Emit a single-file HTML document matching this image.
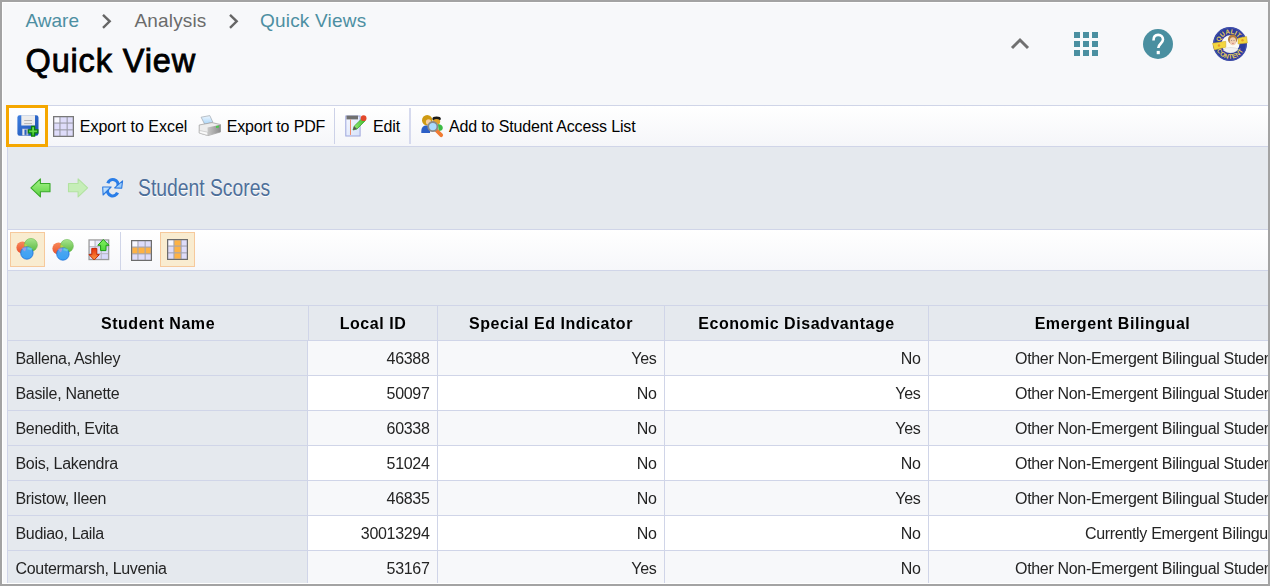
<!DOCTYPE html>
<html><head><meta charset="utf-8"><title>Quick View</title><style>
*{box-sizing:border-box}
html,body{margin:0;padding:0}
body{width:1270px;height:586px;overflow:hidden;position:relative;background:#f7f8fa;font-family:"Liberation Sans",sans-serif;color:#000}
.a{position:absolute}
.t{position:absolute;white-space:nowrap;line-height:20px}
svg{position:absolute;overflow:visible}
.c{position:absolute;white-space:nowrap;height:34px;font-size:16px;letter-spacing:-0.32px;line-height:36px;color:#242424}
</style></head><body>
<div class="t" style="left:25.5px;top:9px;font-size:19px;line-height:24px;color:#4d8fa2">Aware</div>
<svg style="left:100px;top:14px" width="14" height="16" viewBox="0 0 14 16"><polyline points="3,0.8 9.7,7.3 3,13.8" fill="none" stroke="#666" stroke-width="2.4"/></svg>
<div class="t" style="left:134.5px;top:9px;font-size:19px;line-height:24px;color:#6b6b6b;letter-spacing:0.15px">Analysis</div>
<svg style="left:226.5px;top:14px" width="14" height="16" viewBox="0 0 14 16"><polyline points="3,0.8 9.7,7.3 3,13.8" fill="none" stroke="#666" stroke-width="2.4"/></svg>
<div class="t" style="left:260px;top:9px;font-size:19px;line-height:24px;color:#4d8fa2;letter-spacing:0.2px">Quick Views</div>
<div class="t" style="left:25.5px;top:42.5px;font-size:32.5px;line-height:36px;color:#000;-webkit-text-stroke:0.85px #000;letter-spacing:0.85px">Quick View</div>
<svg style="left:1008px;top:34px" width="24" height="18" viewBox="0 0 24 18"><polyline points="4,14 12,6 20,14" fill="none" stroke="#707070" stroke-width="3"/></svg>
<svg style="left:1074px;top:32px" width="24" height="24" viewBox="0 0 24 24"><rect x="0" y="0" width="6" height="6" fill="#4a8fa0"/><rect x="0" y="9" width="6" height="6" fill="#4a8fa0"/><rect x="0" y="18" width="6" height="6" fill="#4a8fa0"/><rect x="9" y="0" width="6" height="6" fill="#4a8fa0"/><rect x="9" y="9" width="6" height="6" fill="#4a8fa0"/><rect x="9" y="18" width="6" height="6" fill="#4a8fa0"/><rect x="18" y="0" width="6" height="6" fill="#4a8fa0"/><rect x="18" y="9" width="6" height="6" fill="#4a8fa0"/><rect x="18" y="18" width="6" height="6" fill="#4a8fa0"/></svg>
<svg style="left:1143px;top:29px" width="30" height="30" viewBox="0 0 30 30"><circle cx="15" cy="15" r="15" fill="#4a8fa0"/><path d="M10.5 11.4 C10.5 7.8 12.6 5.9 15.2 5.9 C18 5.9 20 7.8 20 10.6 C20 14.2 15.3 14.8 15.3 19" fill="none" stroke="#fff" stroke-width="2.6"/><rect x="13.7" y="21.9" width="3.1" height="3.3" fill="#fff"/></svg>
<svg style="left:1213px;top:26.5px" width="34" height="34" viewBox="0 0 34 34">
<defs><path id="arcT" d="M6.8 17 A10.2 10.2 0 0 1 27.2 17"/><path id="arcB" d="M2.2 17 A14.8 14.8 0 0 0 31.8 17"/></defs>
<circle cx="17" cy="17" r="17" fill="#2c3c9e"/>
<circle cx="17" cy="17" r="16.3" fill="none" stroke="#5866b8" stroke-width="0.5"/>
<text font-family="Liberation Sans" font-weight="bold" font-size="6.4" fill="#ead05a"><textPath href="#arcT" startOffset="50%" text-anchor="middle">QUALITY</textPath></text>
<text font-family="Liberation Sans" font-weight="bold" font-size="6.4" fill="#ead05a" letter-spacing="0.3"><textPath href="#arcB" startOffset="50%" text-anchor="middle">CONTENT</textPath></text>
<circle cx="17.5" cy="17" r="9" fill="#fbfbf6"/>
<path d="M-0.5 16.3 L12.8 14.3 L12.8 20.2 L1.4 22.9 Z" fill="#f3d63e" stroke="#c8a428" stroke-width="0.5"/>
<path d="M25 11.2 L33.6 9.6 L34.4 15.9 L25 17 Z" fill="#f3d63e" stroke="#c8a428" stroke-width="0.5"/>
<circle cx="6" cy="18.5" r="1.2" fill="#e59a2a"/><circle cx="29.5" cy="13.2" r="1.2" fill="#e59a2a"/>
<path d="M10 23 Q13 20 18 20.5 Q23 20.5 25.5 22.5 Q22 25.8 17.5 25.8 Q13 25.8 10 23 Z" fill="#f2f2f2" stroke="#c4c4c4" stroke-width="0.4"/>
<ellipse cx="19.6" cy="12.4" rx="4.6" ry="4.8" fill="#b07a3c"/>
<ellipse cx="19.9" cy="14.2" rx="3.2" ry="4" fill="#f0cdb0"/>
<circle cx="18.7" cy="13.5" r="0.45" fill="#555"/><circle cx="21" cy="13.5" r="0.45" fill="#555"/>
<path d="M19 16.3 Q19.9 17 20.8 16.3" stroke="#c05a6a" stroke-width="0.6" fill="none"/>
</svg>
<div class="a" style="left:7px;top:105px;width:1261px;height:42px;border-top:1px solid #d0d5e8;border-bottom:1px solid #d0d5e8;background:linear-gradient(#ffffff,#f5f6f9)"></div>
<div class="a" style="left:6px;top:105px;width:42px;height:42px;border:3px solid #f5a700"></div>
<svg style="left:16px;top:114px" width="24" height="24" viewBox="0 0 24 24">
<defs><linearGradient id="gb" x1="0" y1="0" x2="1" y2="1"><stop offset="0" stop-color="#3d7fe0"/><stop offset="1" stop-color="#1b4db0"/></linearGradient>
<linearGradient id="gg" x1="0" y1="0" x2="0" y2="1"><stop offset="0" stop-color="#86f060"/><stop offset="1" stop-color="#3cc22a"/></linearGradient></defs>
<rect x="1.4" y="1.2" width="21.1" height="20.5" rx="2.2" fill="url(#gb)"/>
<rect x="5.3" y="1.2" width="13.7" height="10.3" fill="#ececec"/>
<rect x="8.2" y="6" width="7.8" height="1" fill="#b5b5b5"/><rect x="8.2" y="9.1" width="7.8" height="1" fill="#b5b5b5"/>
<rect x="6.1" y="14.7" width="6.2" height="6.8" fill="#aab6d2"/><rect x="6.8" y="15.2" width="1.6" height="6" fill="#e4e8f0"/><rect x="8.6" y="15.8" width="1.8" height="5" fill="#2a60c0"/>
<path d="M15.6 12.5 h3 v3.3 h3.2 v3 h-3.2 v3.3 h-3 v-3.3 h-3.2 v-3 h3.2 z" fill="url(#gg)" stroke="#0a800a" stroke-width="1.3" stroke-linejoin="miter"/>
</svg>
<svg style="left:53.3px;top:115.6px" width="21" height="21" viewBox="0 0 21 21"><rect x="0" y="0" width="21" height="21" fill="#787878"/><rect x="1.1" y="1.1" width="18.8" height="18.8" fill="#9a9aa6"/><rect x="1.4" y="1.4" width="5.0" height="5.1" fill="#f7f7fe"/><rect x="1.4" y="7.6" width="5.0" height="5.7" fill="#dedcfa"/><rect x="1.4" y="14.4" width="5.0" height="5.2" fill="#dedcfa"/><rect x="7.5" y="1.4" width="6.1" height="5.1" fill="#dedcfa"/><rect x="7.5" y="7.6" width="6.1" height="5.7" fill="#dedcfa"/><rect x="7.5" y="14.4" width="6.1" height="5.2" fill="#dedcfa"/><rect x="14.7" y="1.4" width="4.9" height="5.1" fill="#dedcfa"/><rect x="14.7" y="7.6" width="4.9" height="5.7" fill="#dedcfa"/><rect x="14.7" y="14.4" width="4.9" height="5.2" fill="#dedcfa"/></svg>
<div class="t" style="left:79.8px;top:117px;font-size:16px;letter-spacing:0px">Export to Excel</div>
<svg style="left:195px;top:110px" width="30" height="30" viewBox="0 0 30 30">
<defs><linearGradient id="pp" x1="0" y1="0" x2="0" y2="1"><stop offset="0" stop-color="#eef7ff"/><stop offset="1" stop-color="#a8d4f8"/></linearGradient>
<linearGradient id="pf" x1="0" y1="0" x2="1" y2="0"><stop offset="0" stop-color="#c8c8c8"/><stop offset="1" stop-color="#8c8c8c"/></linearGradient></defs>
<path d="M6.1 7.2 L14.8 5.6 L17.9 12.3 L9.7 14.3 Z" fill="url(#pp)" stroke="#a0a8b0" stroke-width="0.7"/>
<path d="M4.2 15 L17 12.6 L25.5 14.5 L25.5 22 L13 25.6 L4.2 23 Z" fill="#ededed" stroke="#9a9a9a" stroke-width="0.7"/>
<path d="M12.5 17.5 L25.5 14.8 L25.5 22 L12.8 25.6 Z" fill="url(#pf)"/>
<path d="M4.4 20.5 L12.6 22.2 L12.8 25.4 L4.4 23 Z" fill="#fafafa" stroke="#b0b0b0" stroke-width="0.5"/>
<path d="M21 16 L24 15.4 L24 17.4 L21 18 Z" fill="#4cc84c"/>
</svg>
<div class="t" style="left:226.7px;top:117px;font-size:16px;letter-spacing:-0.15px">Export to PDF</div>
<div class="a" style="left:334px;top:108px;width:1px;height:36px;background:#cdd2e8"></div>
<svg style="left:340px;top:110px" width="30" height="30" viewBox="0 0 30 30">
<defs><linearGradient id="pn" x1="0" y1="0" x2="1" y2="1"><stop offset="0" stop-color="#f6f8ff"/><stop offset="1" stop-color="#d6e2fa"/></linearGradient>
<linearGradient id="pg" x1="0" y1="0" x2="1" y2="0"><stop offset="0" stop-color="#9af07a"/><stop offset="1" stop-color="#3cb82a"/></linearGradient></defs>
<rect x="5.8" y="6" width="14.3" height="20" fill="url(#pn)" stroke="#9ea6dc" stroke-width="1"/>
<rect x="6.5" y="5.6" width="11.5" height="3.8" fill="#707070"/>
<rect x="10" y="9.4" width="1" height="15.5" fill="#f08a6a"/>
<path d="M13 20 L14.2 16.2 L22.5 8 L25.2 10.8 L17 19 Z" fill="url(#pg)" stroke="#2e9a20" stroke-width="0.7"/>
<path d="M13 20 L14.2 16.2 L17 19 Z" fill="#555"/>
<circle cx="23.6" cy="8.2" r="2.9" fill="#e2482a"/>
</svg>
<div class="t" style="left:373px;top:117px;font-size:16px;letter-spacing:-0.15px">Edit</div>
<div class="a" style="left:409px;top:108px;width:2px;height:36px;background:#d6daee"></div>
<svg style="left:418px;top:112px" width="28" height="28" viewBox="0 0 28 28">
<ellipse cx="9.2" cy="8.3" rx="5.2" ry="5.2" fill="#cf9a12"/>
<ellipse cx="10.5" cy="10" rx="2.6" ry="2.8" fill="#f5cfa0"/>
<path d="M3.3 19 Q3.3 13.4 8.5 13.4 Q12 13.4 12 17 L12 21 L3.3 21 Z" fill="#2c5fc6"/>
<ellipse cx="18.6" cy="6.8" rx="4.2" ry="2.4" fill="#1a1a1a"/>
<ellipse cx="18.6" cy="9.8" rx="3.6" ry="2.8" fill="#e2a32a"/>
<path d="M20 12 Q24.8 12.5 24.8 16 Q24.8 19 20.5 19 Z" fill="#3bbb45"/>
<path d="M18.5 18.5 L23.2 23.2" stroke="#f07a32" stroke-width="3.8" stroke-linecap="round"/>
<circle cx="14.8" cy="14.6" r="4.6" fill="#aadcff" stroke="#8a8a8a" stroke-width="1.8"/>
</svg>
<div class="t" style="left:449px;top:117px;font-size:16px;letter-spacing:-0.15px">Add to Student Access List</div>
<div class="a" style="left:7px;top:147px;width:1261px;height:82px;background:#e5e9ee;border-left:1px solid #d0d5e8"></div>
<svg style="left:28px;top:176px" width="26" height="26" viewBox="0 0 26 26">
<defs><linearGradient id="ag" x1="0" y1="0" x2="0" y2="1"><stop offset="0" stop-color="#a6f48a"/><stop offset="1" stop-color="#5cd042"/></linearGradient></defs>
<path d="M2.9 11.8 L12.4 2.9 L12.4 7.5 L22 7.5 L22 15.7 L12.4 15.7 L12.4 20.9 Z" fill="url(#ag)" stroke="#3aaa2a" stroke-width="1.1" stroke-linejoin="round"/></svg>
<svg style="left:65px;top:176px" width="26" height="26" viewBox="0 0 26 26">
<path d="M22.6 11.8 L13.1 2.9 L13.1 7.5 L3.5 7.5 L3.5 15.7 L13.1 15.7 L13.1 20.9 Z" fill="#c6eeb8" stroke="#b2e2a0" stroke-width="1.1" stroke-linejoin="round"/></svg>
<svg style="left:100px;top:175px" width="26" height="26" viewBox="0 0 26 26">
<defs><linearGradient id="rg" x1="0" y1="0" x2="1" y2="1"><stop offset="0" stop-color="#d8eeff"/><stop offset="1" stop-color="#7cbcf8"/></linearGradient>
<linearGradient id="rs" x1="0" y1="0" x2="0" y2="1"><stop offset="0" stop-color="#3a8ef0"/><stop offset="1" stop-color="#5aaaf8"/></linearGradient></defs>
<path d="M7.8 8.2 A5.2 5.2 0 0 1 17.8 11.3" fill="none" stroke="#2a7ee8" stroke-width="3.2"/>
<path d="M22.6 5.8 L21.7 13.3 L14.6 12.9 Z" fill="url(#rg)" stroke="#2a78e0" stroke-width="1.1" stroke-linejoin="round"/>
<path d="M17.5 17.6 A5.2 5.2 0 0 1 7.6 14.5" fill="none" stroke="#2a7ee8" stroke-width="3.2"/>
<path d="M2.7 12 L3.1 20 L11.1 12 Z" fill="url(#rg)" stroke="#2a78e0" stroke-width="1.1" stroke-linejoin="round"/>
</svg>
<div class="t" style="left:138px;top:175px;font-size:23px;line-height:26px;color:#4e6f9a;transform-origin:0 0;transform:scaleX(0.84);text-shadow:0 1px 0 #fff">Student Scores</div>
<div class="a" style="left:7px;top:229px;width:1261px;height:42px;border-top:1px solid #d0d5e8;border-bottom:1px solid #d0d5e8;border-left:1px solid #d0d5e8;background:linear-gradient(#ffffff,#f6f7fa)"></div>
<div class="a" style="left:10px;top:232px;width:35px;height:35px;background:#f9ecd0;border:1px solid #f6c99c"></div>
<div class="a" style="left:160px;top:232px;width:35px;height:35px;background:#f9ecd0;border:1px solid #f6c99c"></div>
<svg style="left:14px;top:236px" width="26" height="26" viewBox="0 0 26 26">
<defs><linearGradient id="vr1" x1="0" y1="0" x2="0" y2="1"><stop offset="0" stop-color="#f88a5a"/><stop offset="1" stop-color="#e8502e"/></linearGradient>
<linearGradient id="vg1" x1="0" y1="0" x2="0" y2="1"><stop offset="0" stop-color="#a8e48c"/><stop offset="1" stop-color="#5ab840"/></linearGradient>
<linearGradient id="vb1" x1="0" y1="0" x2="0" y2="1"><stop offset="0" stop-color="#50a8f0"/><stop offset="1" stop-color="#3aa0f4"/></linearGradient></defs>
<circle cx="8.5" cy="11.5" r="6.1" fill="url(#vr1)"/>
<circle cx="16.9" cy="8.9" r="6.5" fill="url(#vg1)" stroke="#58b040" stroke-width="0.5"/>
<path d="M10.4 7.6 A6.5 6.5 0 0 1 14.4 14.3 A6.1 6.1 0 0 1 10.4 7.6 Z" fill="#c8d040" opacity="0.8"/>
<circle cx="12.9" cy="17" r="6.2" fill="url(#vb1)" stroke="#2070d8" stroke-width="0.8"/>
<path d="M8 12 Q10 11 12.5 11.5 L11 15.5 Q9 15 8 12 Z" fill="#b098e0" opacity="0.8"/>
<path d="M13.5 11 Q16 11.2 18.6 12.8 L17 14.5 Q15 13 13.5 13.5 Z" fill="#70d8d0" opacity="0.8"/>
</svg>
<svg style="left:50px;top:237px" width="26" height="26" viewBox="0 0 26 26">
<defs><linearGradient id="vr2" x1="0" y1="0" x2="0" y2="1"><stop offset="0" stop-color="#f88a5a"/><stop offset="1" stop-color="#e8502e"/></linearGradient>
<linearGradient id="vg2" x1="0" y1="0" x2="0" y2="1"><stop offset="0" stop-color="#a8e48c"/><stop offset="1" stop-color="#5ab840"/></linearGradient>
<linearGradient id="vb2" x1="0" y1="0" x2="0" y2="1"><stop offset="0" stop-color="#50a8f0"/><stop offset="1" stop-color="#3aa0f4"/></linearGradient></defs>
<circle cx="8.5" cy="11.5" r="6.1" fill="url(#vr2)"/>
<circle cx="16.9" cy="8.9" r="6.5" fill="url(#vg2)" stroke="#58b040" stroke-width="0.5"/>
<path d="M10.4 7.6 A6.5 6.5 0 0 1 14.4 14.3 A6.1 6.1 0 0 1 10.4 7.6 Z" fill="#c8d040" opacity="0.8"/>
<circle cx="12.9" cy="17" r="6.2" fill="url(#vb2)" stroke="#2070d8" stroke-width="0.8"/>
<path d="M8 12 Q10 11 12.5 11.5 L11 15.5 Q9 15 8 12 Z" fill="#b098e0" opacity="0.8"/>
<path d="M13.5 11 Q16 11.2 18.6 12.8 L17 14.5 Q15 13 13.5 13.5 Z" fill="#70d8d0" opacity="0.8"/>
</svg>
<svg style="left:86px;top:236px" width="26" height="26" viewBox="0 0 26 26">
<defs><linearGradient id="ig" x1="0" y1="0" x2="0" y2="1"><stop offset="0" stop-color="#80f060"/><stop offset="1" stop-color="#50d838"/></linearGradient>
<linearGradient id="ir" x1="0" y1="0" x2="0" y2="1"><stop offset="0" stop-color="#e83010"/><stop offset="1" stop-color="#fc9a40"/></linearGradient></defs>
<rect x="2.4" y="3.3" width="20.9" height="20.9" fill="#9a9a9a"/>
<rect x="3.6" y="4.5" width="18.5" height="18.5" fill="#b8b8c4"/>
<rect x="3.8" y="4.7" width="4.7" height="5.4" fill="#f8f8fe"/><rect x="9.6" y="4.7" width="5.1" height="5.4" fill="#e6e6fa"/><rect x="15.8" y="4.7" width="6.1" height="5.4" fill="#e0e0fa"/>
<rect x="3.8" y="11.2" width="4.7" height="5.9" fill="#e6e6fa"/><rect x="9.6" y="11.2" width="5.1" height="5.9" fill="#e0e0fa"/><rect x="15.8" y="11.2" width="6.1" height="5.9" fill="#dcdcfa"/>
<rect x="3.8" y="18.2" width="4.7" height="4.6" fill="#e0e0fa"/><rect x="9.6" y="18.2" width="5.1" height="4.6" fill="#dcdcfa"/><rect x="15.8" y="18.2" width="6.1" height="4.6" fill="#d8d8fa"/>
<path d="M17.3 3.5 L23 9.3 L20 9.3 L20 14.6 L14.6 14.6 L14.6 9.3 L11.8 9.3 Z" fill="url(#ig)" stroke="#1c9a14" stroke-width="1" stroke-linejoin="round"/>
<path d="M8.2 24 L13.4 18.6 L10.8 18.6 L10.8 12.4 L5.8 12.4 L5.8 18.6 L3 18.6 Z" fill="url(#ir)" stroke="#c02808" stroke-width="1" stroke-linejoin="round"/>
</svg>
<div class="a" style="left:120px;top:232px;width:1px;height:38px;background:#d0d5e8"></div>
<svg style="left:131.3px;top:239.5px" width="21" height="21" viewBox="0 0 21 21"><rect x="0" y="0" width="21" height="21" fill="#6c6c6c"/><rect x="1.1" y="1.1" width="18.8" height="18.8" fill="#a4a4b0"/><rect x="1.4" y="1.4" width="5.0" height="5.1" fill="#f7f7fe"/><rect x="1.4" y="7.6" width="5.0" height="5.7" fill="#fdb246"/><rect x="1.4" y="14.4" width="5.0" height="5.2" fill="#dedcfa"/><rect x="7.5" y="1.4" width="6.1" height="5.1" fill="#dedcfa"/><rect x="7.5" y="7.6" width="6.1" height="5.7" fill="#fdb246"/><rect x="7.5" y="14.4" width="6.1" height="5.2" fill="#dedcfa"/><rect x="14.7" y="1.4" width="4.9" height="5.1" fill="#dedcfa"/><rect x="14.7" y="7.6" width="4.9" height="5.7" fill="#fdb246"/><rect x="14.7" y="14.4" width="4.9" height="5.2" fill="#dedcfa"/></svg>
<svg style="left:167.3px;top:238.7px" width="21" height="21" viewBox="0 0 21 21"><rect x="0" y="0" width="21" height="21" fill="#6c6c6c"/><rect x="1.1" y="1.1" width="18.8" height="18.8" fill="#a4a4b0"/><rect x="1.4" y="1.4" width="5.0" height="5.1" fill="#f7f7fe"/><rect x="1.4" y="7.6" width="5.0" height="5.7" fill="#dedcfa"/><rect x="1.4" y="14.4" width="5.0" height="5.2" fill="#dedcfa"/><rect x="7.5" y="1.4" width="6.1" height="5.1" fill="#fdb246"/><rect x="7.5" y="7.6" width="6.1" height="5.7" fill="#fdb246"/><rect x="7.5" y="14.4" width="6.1" height="5.2" fill="#fdb246"/><rect x="14.7" y="1.4" width="4.9" height="5.1" fill="#dedcfa"/><rect x="14.7" y="7.6" width="4.9" height="5.7" fill="#dedcfa"/><rect x="14.7" y="14.4" width="4.9" height="5.2" fill="#dedcfa"/></svg>
<div class="a" style="left:7px;top:271px;width:1261px;height:34px;background:#e5e9ee;border-left:1px solid #d0d5e8"></div>
<div class="a" style="left:0;top:0;width:1270px;height:586px;will-change:transform">
<div class="a" style="left:7px;top:305px;width:1261px;height:280px;background:#d0d5e8"></div>
<div class="t" style="left:8px;top:306px;width:300px;height:34px;background:#e5e9ee;text-align:center;font-weight:bold;font-size:16px;letter-spacing:0.55px;line-height:36px;color:#000">Student Name</div>
<div class="t" style="left:309px;top:306px;width:128px;height:34px;background:#e5e9ee;text-align:center;font-weight:bold;font-size:16px;letter-spacing:0.55px;line-height:36px;color:#000">Local ID</div>
<div class="t" style="left:438px;top:306px;width:226px;height:34px;background:#e5e9ee;text-align:center;font-weight:bold;font-size:16px;letter-spacing:0.55px;line-height:36px;color:#000">Special Ed Indicator</div>
<div class="t" style="left:665px;top:306px;width:263px;height:34px;background:#e5e9ee;text-align:center;font-weight:bold;font-size:16px;letter-spacing:0.55px;line-height:36px;color:#000">Economic Disadvantage</div>
<div class="t" style="left:929px;top:306px;width:367px;height:34px;background:#e5e9ee;text-align:center;font-weight:bold;font-size:16px;letter-spacing:0.55px;line-height:36px;color:#000">Emergent Bilingual</div>
<div class="c" style="left:8px;top:341px;width:299px;background:#e5e9ee;padding-left:7.5px">Ballena, Ashley</div>
<div class="c" style="left:308px;top:341px;width:129px;background:#f7f8fa;text-align:right;padding-right:7.5px">46388</div>
<div class="c" style="left:438px;top:341px;width:226px;background:#f7f8fa;text-align:right;padding-right:7.5px">Yes</div>
<div class="c" style="left:665px;top:341px;width:263px;background:#f7f8fa;text-align:right;padding-right:7.5px">No</div>
<div class="c" style="left:929px;top:341px;width:471px;background:#f7f8fa;padding-left:86px">Other Non-Emergent Bilingual Students</div>
<div class="c" style="left:8px;top:376px;width:299px;background:#e5e9ee;padding-left:7.5px">Basile, Nanette</div>
<div class="c" style="left:308px;top:376px;width:129px;background:#ffffff;text-align:right;padding-right:7.5px">50097</div>
<div class="c" style="left:438px;top:376px;width:226px;background:#ffffff;text-align:right;padding-right:7.5px">No</div>
<div class="c" style="left:665px;top:376px;width:263px;background:#ffffff;text-align:right;padding-right:7.5px">Yes</div>
<div class="c" style="left:929px;top:376px;width:471px;background:#ffffff;padding-left:86px">Other Non-Emergent Bilingual Students</div>
<div class="c" style="left:8px;top:411px;width:299px;background:#e5e9ee;padding-left:7.5px">Benedith, Evita</div>
<div class="c" style="left:308px;top:411px;width:129px;background:#f7f8fa;text-align:right;padding-right:7.5px">60338</div>
<div class="c" style="left:438px;top:411px;width:226px;background:#f7f8fa;text-align:right;padding-right:7.5px">No</div>
<div class="c" style="left:665px;top:411px;width:263px;background:#f7f8fa;text-align:right;padding-right:7.5px">Yes</div>
<div class="c" style="left:929px;top:411px;width:471px;background:#f7f8fa;padding-left:86px">Other Non-Emergent Bilingual Students</div>
<div class="c" style="left:8px;top:446px;width:299px;background:#e5e9ee;padding-left:7.5px">Bois, Lakendra</div>
<div class="c" style="left:308px;top:446px;width:129px;background:#ffffff;text-align:right;padding-right:7.5px">51024</div>
<div class="c" style="left:438px;top:446px;width:226px;background:#ffffff;text-align:right;padding-right:7.5px">No</div>
<div class="c" style="left:665px;top:446px;width:263px;background:#ffffff;text-align:right;padding-right:7.5px">No</div>
<div class="c" style="left:929px;top:446px;width:471px;background:#ffffff;padding-left:86px">Other Non-Emergent Bilingual Students</div>
<div class="c" style="left:8px;top:481px;width:299px;background:#e5e9ee;padding-left:7.5px">Bristow, Ileen</div>
<div class="c" style="left:308px;top:481px;width:129px;background:#f7f8fa;text-align:right;padding-right:7.5px">46835</div>
<div class="c" style="left:438px;top:481px;width:226px;background:#f7f8fa;text-align:right;padding-right:7.5px">No</div>
<div class="c" style="left:665px;top:481px;width:263px;background:#f7f8fa;text-align:right;padding-right:7.5px">Yes</div>
<div class="c" style="left:929px;top:481px;width:471px;background:#f7f8fa;padding-left:86px">Other Non-Emergent Bilingual Students</div>
<div class="c" style="left:8px;top:516px;width:299px;background:#e5e9ee;padding-left:7.5px">Budiao, Laila</div>
<div class="c" style="left:308px;top:516px;width:129px;background:#ffffff;text-align:right;padding-right:7.5px">30013294</div>
<div class="c" style="left:438px;top:516px;width:226px;background:#ffffff;text-align:right;padding-right:7.5px">No</div>
<div class="c" style="left:665px;top:516px;width:263px;background:#ffffff;text-align:right;padding-right:7.5px">No</div>
<div class="c" style="left:929px;top:516px;width:471px;background:#ffffff;padding-left:156px">Currently Emergent Bilingual</div>
<div class="c" style="left:8px;top:551px;width:299px;background:#e5e9ee;padding-left:7.5px">Coutermarsh, Luvenia</div>
<div class="c" style="left:308px;top:551px;width:129px;background:#f7f8fa;text-align:right;padding-right:7.5px">53167</div>
<div class="c" style="left:438px;top:551px;width:226px;background:#f7f8fa;text-align:right;padding-right:7.5px">Yes</div>
<div class="c" style="left:665px;top:551px;width:263px;background:#f7f8fa;text-align:right;padding-right:7.5px">No</div>
<div class="c" style="left:929px;top:551px;width:471px;background:#f7f8fa;padding-left:86px">Other Non-Emergent Bilingual Students</div>
</div>
<div class="a" style="left:2px;top:2px;width:1266px;height:582px;border:1px solid #fff;border-right:0"></div>
<div class="a" style="left:0;top:0;width:1270px;height:586px;border:2px solid #a3a3a3"></div>
</body></html>
